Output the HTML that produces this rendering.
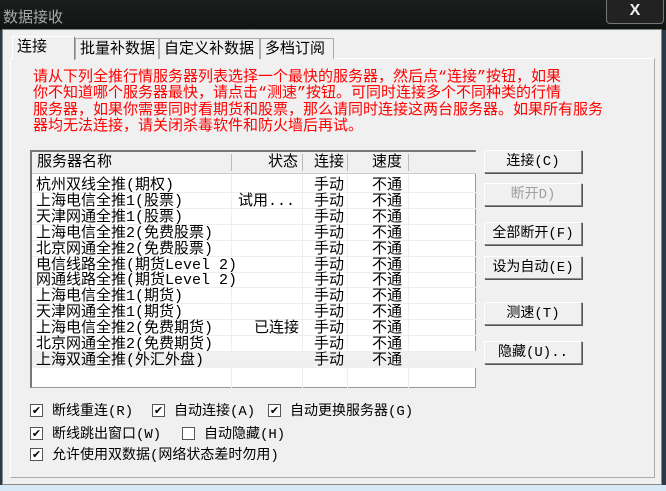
<!DOCTYPE html>
<html><head><meta charset="utf-8"><style>
*{margin:0;padding:0;box-sizing:border-box}
body{width:666px;height:491px;overflow:hidden;background:#2a3a4a;font-family:"Liberation Mono","Noto Sans CJK SC","WenQuanYi Zen Hei",monospace;font-size:14px;color:#000;position:relative}
.a{position:absolute}
.title{left:0;top:0;width:666px;height:30px;background:linear-gradient(#1a1e1c,#101412);}
.dlg{left:2px;top:29px;width:660px;height:456px;background:#f0f0f0;border:1px solid #888}
.tab{top:38px;height:21px;border:1px solid #aaa;border-bottom:none;background:#f0f0f0;font-size:15px;line-height:22px;padding-left:4px;white-space:nowrap}
.panel{left:10px;top:58px;width:645px;height:420px;border:1px solid #aaa;border-top-color:#fff;border-left-color:#fff;background:#f0f0f0}
.red{left:33px;top:70px;width:600px;color:#f00;font-size:15px;line-height:16.3px;white-space:nowrap}
.list{left:30px;top:150px;width:446px;height:238px;background:#fff;border:1px solid #999;border-left:2px solid #777;border-top:2px solid #777}
.hdr{left:0;top:0;height:22px;width:444px;background:#f0f0f0;border-bottom:1px solid #ccc;font-size:15px;line-height:22px}
.row{left:0;height:16px;width:444px;font-size:15px;line-height:17px;border-bottom:1px solid #eee;white-space:nowrap}
.btn{left:484px;width:98px;height:23px;border:1px solid #888;border-top-color:#fff;border-left-color:#fff;box-shadow:1px 1px 0 #555;background:#f0f0f0;text-align:center;font-size:14px;line-height:23px;white-space:nowrap}
.cb{width:13px;height:13px;border:1px solid #555;background:#fff;font-size:11px;line-height:11px;text-align:center;font-family:"DejaVu Sans",sans-serif}
.cl{font-size:14px;line-height:16px;white-space:nowrap}
</style></head><body>
<div class="a title"></div>
<div class="a" style="left:3px;top:6px;color:#aaa;font-size:15px">数据接收</div>
<div class="a" style="left:606px;top:0;width:58px;height:24px;border:1px solid #777;border-top:none;border-radius:0 0 4px 4px;background:#222;color:#eee;text-align:center;font-weight:bold;font-size:16px;line-height:22px;font-family:'Liberation Sans',sans-serif">X</div>
<div class="a dlg"></div>
<div class="a panel"></div>
<div class="a tab" style="left:12px;top:36px;width:63px;height:24px;border-color:#fff #888 #f0f0f0 #fff;z-index:2">连接</div>
<div class="a tab" style="left:75px;width:84px">批量补数据</div>
<div class="a tab" style="left:159px;width:101px">自定义补数据</div>
<div class="a tab" style="left:260px;width:74px">多档订阅</div>
<div class="a red">请从下列全推行情服务器列表选择一个最快的服务器，然后点“连接”按钮，如果<br>你不知道哪个服务器最快，请点击“测速”按钮。可同时连接多个不同种类的行情<br>服务器，如果你需要同时看期货和股票，那么请同时连接这两台服务器。如果所有服务<br>器均无法连接，请关闭杀毒软件和防火墙后再试。</div>
<div class="a list">
<div class="a hdr"><span class="a" style="left:5px">服务器名称</span><span class="a" style="left:236px">状态</span><span class="a" style="left:282px">连接</span><span class="a" style="left:340px">速度</span>
<div class="a" style="left:199px;top:2px;width:1px;height:17px;background:#bbb"></div><div class="a" style="left:270px;top:2px;width:1px;height:17px;background:#bbb"></div><div class="a" style="left:315px;top:2px;width:1px;height:17px;background:#bbb"></div><div class="a" style="left:376px;top:2px;width:1px;height:17px;background:#bbb"></div></div>
<div class="a" style="left:199px;top:22px;width:1px;height:214px;background:#eee"></div><div class="a" style="left:270px;top:22px;width:1px;height:214px;background:#eee"></div><div class="a" style="left:315px;top:22px;width:1px;height:214px;background:#eee"></div><div class="a" style="left:376px;top:22px;width:1px;height:214px;background:#eee"></div>
<div id="rows"></div>
</div>
<script>
var d=[["杭州双线全推(期权)",""],["上海电信全推1(股票)","试用..."],["天津网通全推1(股票)",""],["上海电信全推2(免费股票)",""],["北京网通全推2(免费股票)",""],["电信线路全推(期货Level 2)",""],["网通线路全推(期货Level 2)",""],["上海电信全推1(期货)",""],["天津网通全推1(期货)",""],["上海电信全推2(免费期货)","已连接"],["北京网通全推2(免费期货)",""],["上海双通全推(外汇外盘)",""]];
var h="";d.forEach(function(r,i){h+='<div class="a row" style="top:'+(25+i*15.9)+'px;'+(i==11?'background:#f0f0f0;':'')+'"><span class="a" style="left:4px">'+r[0]+'</span><span class="a" style="left:'+(r[1]=="已连接"?222:206)+'px">'+r[1]+'</span><span class="a" style="left:282px">手动</span><span class="a" style="left:340px">不通</span></div>'});
document.getElementById("rows").innerHTML=h;
</script>
<div class="a btn" style="top:150px">连接(C)</div>
<div class="a btn" style="top:183px;color:#a0a0a0">断开D)</div>
<div class="a btn" style="top:222px">全部断开(F)</div>
<div class="a btn" style="top:256px">设为自动(E)</div>
<div class="a btn" style="top:302px">测速(T)</div>
<div class="a btn" style="top:341px">隐藏(U)..</div>
<div class="a cb" style="left:30px;top:404px">✔</div><div class="a cl" style="left:52px;top:404px">断线重连(R)</div>
<div class="a cb" style="left:152px;top:404px">✔</div><div class="a cl" style="left:174px;top:404px">自动连接(A)</div>
<div class="a cb" style="left:268px;top:404px">✔</div><div class="a cl" style="left:290px;top:404px">自动更换服务器(G)</div>
<div class="a cb" style="left:30px;top:427px">✔</div><div class="a cl" style="left:52px;top:427px">断线跳出窗口(W)</div>
<div class="a cb" style="left:182px;top:427px"></div><div class="a cl" style="left:204px;top:427px">自动隐藏(H)</div>
<div class="a cb" style="left:30px;top:448px">✔</div><div class="a cl" style="left:52px;top:448px">允许使用双数据(网络状态差时勿用)</div>
<div class="a" style="left:0;top:485px;width:666px;height:6px;background:#d8e8f4"></div>
</body></html>
